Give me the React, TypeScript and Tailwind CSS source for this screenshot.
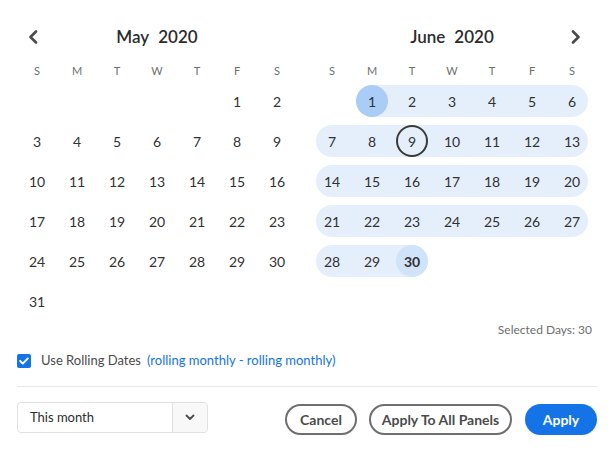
import React from 'react';
import clsx from 'clsx';

type Month = { name: string; year: number; startDay: number; days: number };

const MAY: Month = { name: 'May', year: 2020, startDay: 5, days: 31 };
const JUNE: Month = { name: 'June', year: 2020, startDay: 1, days: 30 };

const DAY_NAMES = ['S', 'M', 'T', 'W', 'T', 'F', 'S'];

// 월 -> 주 단위 배열
function buildWeeks(month: Month) {
  const cells: (number | null)[] = [];
  for (let i = 0; i < month.startDay; i++) cells.push(null);
  for (let d = 1; d <= month.days; d++) cells.push(d);
  const weeks: (number | null)[][] = [];
  for (let i = 0; i < cells.length; i += 7) weeks.push(cells.slice(i, i + 7));
  return weeks;
}

function Chevron({ dir }: { dir: 'left' | 'right' }) {
  return (
    <svg width="10" height="14" viewBox="0 0 10 14" fill="none">
      <path
        d={dir === 'left' ? 'M8 1.5 L2.5 7 L8 12.5' : 'M2 1.5 L7.5 7 L2 12.5'}
        stroke="#4b4b4b"
        strokeWidth="2.6"
        strokeLinecap="round"
        strokeLinejoin="round"
      />
    </svg>
  );
}

function Calendar({
  month,
  nav,
  range,
  today,
}: {
  month: Month;
  nav: 'left' | 'right';
  range?: [number, number];
  today?: number;
}) {
  const weeks = buildWeeks(month);

  return (
    <div className="w-[280px]">
      <div className="grid h-7 grid-cols-[40px_1fr_40px] items-center">
        <div className="flex pl-[11px]">{nav === 'left' && <Chevron dir="left" />}</div>
        <div className="text-center text-[17px] font-semibold text-[#2c2c2c]">
          {month.name}
          <span className="ml-[9px]">{month.year}</span>
        </div>
        <div className="flex justify-end pr-[11px]">{nav === 'right' && <Chevron dir="right" />}</div>
      </div>

      <div className="mt-[10px] grid h-5 grid-cols-7 items-center">
        {DAY_NAMES.map((d, i) => (
          <div key={i} className="text-center text-[11px] text-[#6e6e6e]">
            {d}
          </div>
        ))}
      </div>

      {weeks.map((week, wi) => (
        <div key={wi} className="grid grid-cols-7">
          {Array.from({ length: 7 }).map((_, ci) => {
            const day = week[ci] ?? null;
            if (day === null) return <div key={ci} className="h-10" />;

            const inRange = !!range && day >= range[0] && day <= range[1];
            const isStart = inRange && day === range![0];
            const isEnd = inRange && day === range![1];
            const leftEdge = inRange && (isStart || ci === 0);
            const rightEdge = inRange && (isEnd || ci === 6);

            let circle = 'flex h-8 w-8 items-center justify-center rounded-full text-[14px] text-[#323232]';
            if (isStart) circle += ' bg-[#a9cdf6]';
            if (isEnd) circle += ' bg-[#d0e3f9] font-bold';
            if (day === today) circle += ' border-2 border-[#3a3a3a]';

            return (
              <div key={ci} className="flex h-10 items-center">
                <div
                  className={clsx(
                    'flex h-8',
                    inRange && 'bg-[#e5effb]',
                    leftEdge && rightEdge
                      ? 'mx-1 w-8 justify-center rounded-full'
                      : leftEdge
                        ? 'ml-1 flex-1 justify-start rounded-l-full'
                        : rightEdge
                          ? 'mr-1 flex-1 justify-end rounded-r-full'
                          : 'flex-1 justify-center',
                  )}
                >
                  <span className={circle}>{day}</span>
                </div>
              </div>
            );
          })}
        </div>
      ))}
    </div>
  );
}

export default function App() {
  return (
    <div className="h-[452px] w-[609px] overflow-hidden bg-white pl-[17px] pr-[12px] pt-[23px] font-['Lato','Noto_Sans',sans-serif]">
      <div className="flex w-[575px] items-start gap-[15px]">
        <Calendar month={MAY} nav="left" />
        <Calendar month={JUNE} nav="right" range={[1, 30]} today={9} />
      </div>

      <div className="flex h-[18px] w-[575px] items-center justify-end text-[12px] text-[#6e6e6e]">
        Selected Days: 30
      </div>

      {/* 롤링 날짜 체크박스 */}
      <div className="mt-[10px] flex h-6 items-center">
        <span className="flex h-[14px] w-[14px] items-center justify-center rounded-[2px] bg-[#1473e6]">
          <svg width="10" height="8" viewBox="0 0 10 8" fill="none">
            <path d="M1.2 4 L3.8 6.6 L8.8 1.4" stroke="white" strokeWidth="1.9" strokeLinecap="round" strokeLinejoin="round" />
          </svg>
        </span>
        <span className="ml-[10px] text-[13px] text-[#4b4b4b]">Use Rolling Dates</span>
        <span className="ml-[6px] text-[13px] text-[#1473e6]">(rolling monthly - rolling monthly)</span>
      </div>

      <div className="mt-[13px] h-px w-[580px] bg-[#e8e8e8]" />

      <div className="mt-[15px] flex w-[580px] items-start justify-between">
        <div className="flex h-[31px] w-[191px] overflow-hidden rounded-[4px] border border-[#e1e1e1]">
          <div className="flex flex-1 items-center pl-[12px] text-[13px] text-[#2c2c2c]">This month</div>
          <div className="flex w-[35px] items-center justify-center border-l border-[#e1e1e1] bg-[#f8f8f8]">
            <svg width="10" height="7" viewBox="0 0 10 7" fill="none">
              <path d="M1.5 1.5 L5 5 L8.5 1.5" stroke="#4b4b4b" strokeWidth="1.8" strokeLinecap="round" strokeLinejoin="round" />
            </svg>
          </div>
        </div>

        <div className="mt-[2px] flex items-center">
          <button className="flex h-[31px] w-[72px] items-center justify-center rounded-full border-2 border-[#6e6e6e] text-[14px] font-bold text-[#4b4b4b]">
            Cancel
          </button>
          <button className="ml-[12px] flex h-[31px] w-[143px] items-center justify-center rounded-full border-2 border-[#6e6e6e] text-[14px] font-bold text-[#4b4b4b]">
            Apply To All Panels
          </button>
          <button className="ml-[13px] flex h-[31px] w-[72px] items-center justify-center rounded-full bg-[#1473e6] text-[14px] font-bold text-white">
            Apply
          </button>
        </div>
      </div>
    </div>
  );
}
